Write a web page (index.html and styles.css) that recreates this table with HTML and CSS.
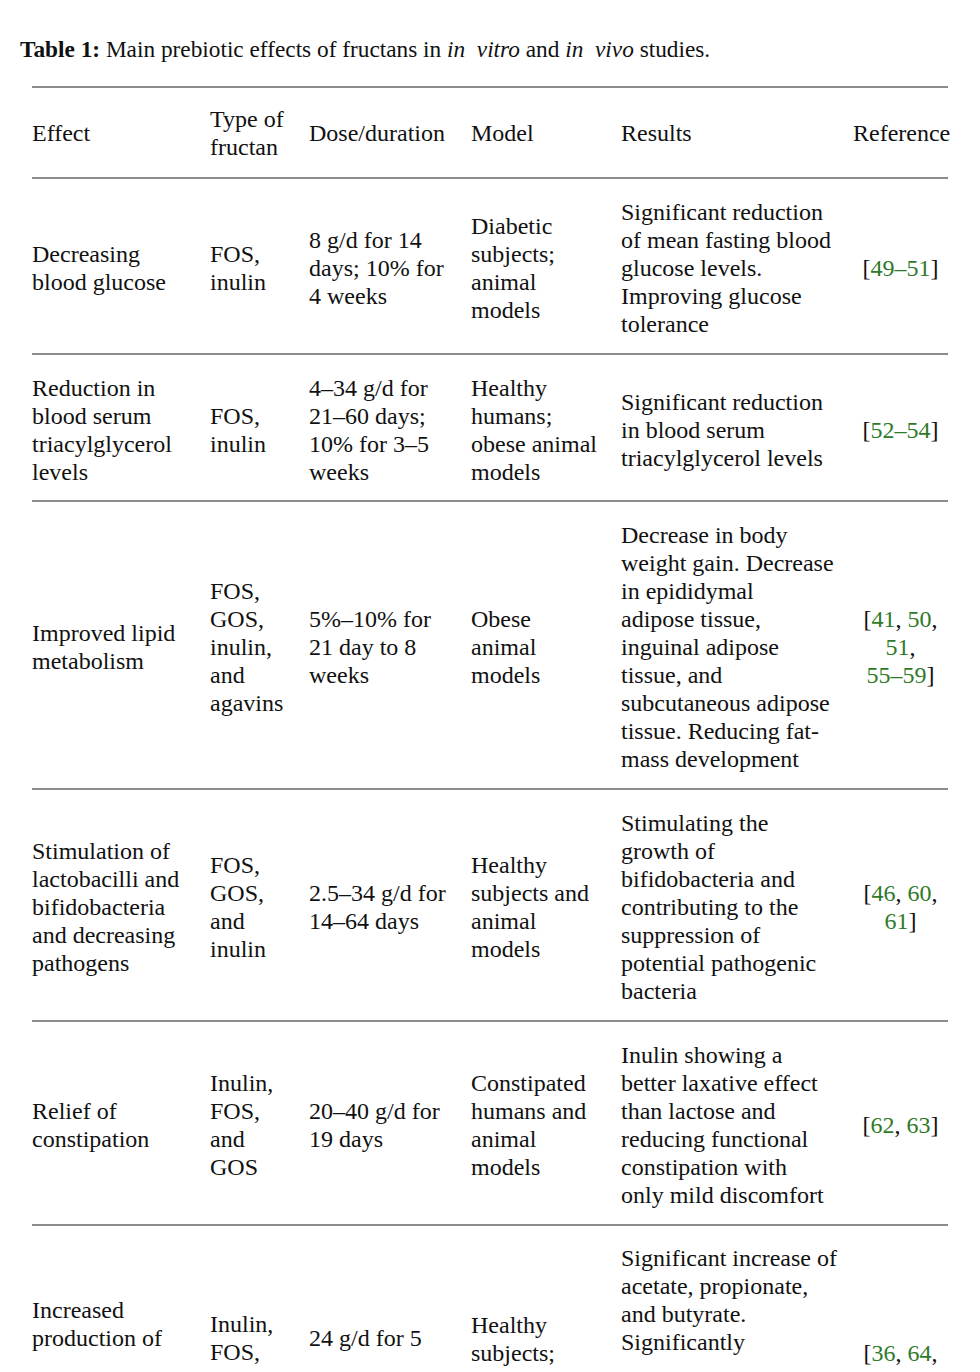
FILE: index.html
```html
<!DOCTYPE html>
<html lang="en">
<head>
<meta charset="utf-8">
<title>Table 1</title>
<link rel="stylesheet" href="styles.css">
</head>
<body>
<div class="page">
  <p class="caption"><b>Table 1:</b> Main prebiotic effects of fructans in <i>in&nbsp; vitro</i> and <i>in&nbsp; vivo</i> studies.</p>
  <table class="data">
    <colgroup>
      <col class="c-effect"><col class="c-type"><col class="c-dose"><col class="c-model"><col class="c-results"><col class="c-ref">
    </colgroup>
    <thead>
      <tr>
        <th>Effect</th>
        <th>Type of<br>fructan</th>
        <th>Dose/duration</th>
        <th>Model</th>
        <th>Results</th>
        <th class="ref">Reference</th>
      </tr>
    </thead>
    <tbody>
      <tr>
        <td>Decreasing<br>blood glucose</td>
        <td>FOS,<br>inulin</td>
        <td>8 g/d for 14<br>days; 10% for<br>4 weeks</td>
        <td>Diabetic<br>subjects;<br>animal<br>models</td>
        <td>Significant reduction<br>of mean fasting blood<br>glucose levels.<br>Improving glucose<br>tolerance</td>
        <td class="ref">[<span class="cite">49–51</span>]</td>
      </tr>
      <tr class="tight">
        <td>Reduction in<br>blood serum<br>triacylglycerol<br>levels</td>
        <td>FOS,<br>inulin</td>
        <td>4–34 g/d for<br>21–60 days;<br>10% for 3–5<br>weeks</td>
        <td>Healthy<br>humans;<br>obese animal<br>models</td>
        <td>Significant reduction<br>in blood serum<br>triacylglycerol levels</td>
        <td class="ref">[<span class="cite">52–54</span>]</td>
      </tr>
      <tr>
        <td>Improved lipid<br>metabolism</td>
        <td>FOS,<br>GOS,<br>inulin,<br>and<br>agavins</td>
        <td>5%–10% for<br>21 day to 8<br>weeks</td>
        <td>Obese<br>animal<br>models</td>
        <td>Decrease in body<br>weight gain. Decrease<br>in epididymal<br>adipose tissue,<br>inguinal adipose<br>tissue, and<br>subcutaneous adipose<br>tissue. Reducing fat-<br>mass development</td>
        <td class="ref">[<span class="cite">41</span>, <span class="cite">50</span>,<br><span class="cite">51</span>,<br><span class="cite">55–59</span>]</td>
      </tr>
      <tr>
        <td>Stimulation of<br>lactobacilli and<br>bifidobacteria<br>and decreasing<br>pathogens</td>
        <td>FOS,<br>GOS,<br>and<br>inulin</td>
        <td>2.5–34 g/d for<br>14–64 days</td>
        <td>Healthy<br>subjects and<br>animal<br>models</td>
        <td>Stimulating the<br>growth of<br>bifidobacteria and<br>contributing to the<br>suppression of<br>potential pathogenic<br>bacteria</td>
        <td class="ref">[<span class="cite">46</span>, <span class="cite">60</span>,<br><span class="cite">61</span>]</td>
      </tr>
      <tr>
        <td>Relief of<br>constipation</td>
        <td>Inulin,<br>FOS,<br>and<br>GOS</td>
        <td>20–40 g/d for<br>19 days</td>
        <td>Constipated<br>humans and<br>animal<br>models</td>
        <td>Inulin showing a<br>better laxative effect<br>than lactose and<br>reducing functional<br>constipation with<br>only mild discomfort</td>
        <td class="ref">[<span class="cite">62</span>, <span class="cite">63</span>]</td>
      </tr>
      <tr class="split">
        <td class="s-effect">Increased<br>production of</td>
        <td class="s-type">Inulin,<br>FOS,</td>
        <td class="s-dose">24 g/d for 5</td>
        <td class="s-model">Healthy<br>subjects;</td>
        <td class="s-results">Significant increase of<br>acetate, propionate,<br>and butyrate.<br>Significantly</td>
        <td class="ref s-ref">[<span class="cite">36</span>, <span class="cite">64</span>,</td>
      </tr>
    </tbody>
  </table>
</div>
</body>
</html>
```

FILE: styles.css
```css
html, body {
  margin: 0;
  padding: 0;
  background: #ffffff;
}

body {
  font-family: "Liberation Serif", "Times New Roman", serif;
  color: #111111;
}

.page {
  padding: 35px 32px 0 20px;
}

.caption {
  margin: 0 0 23px 0;
  font-size: 23.3px;
  line-height: 28px;
}

.caption b {
  font-weight: bold;
}

.data {
  margin-left: 12px;
  width: 916px;
  table-layout: fixed;
  border-collapse: collapse;
  font-size: 24px;
  line-height: 28px;
}

.c-effect { width: 178px; }
.c-type { width: 99px; }
.c-dose { width: 162px; }
.c-model { width: 150px; }
.c-results { width: 232px; }
.c-ref { width: 95px; }

.data th,
.data td {
  padding: 19px 0 15px;
  text-align: left;
  vertical-align: middle;
  font-weight: normal;
  white-space: nowrap;
  border-top: 2px solid #8c8c8c;
}

.data thead th {
  padding: 17px 0 16px;
  border-bottom: 2px solid #8c8c8c;
}

.data tr.tight td {
  padding-bottom: 14px;
}

.data .ref {
  text-align: center;
}

.cite {
  color: #2f7a28;
}

/* last row continues on the next page: each cell fragment sits at its own height */
.data tr.split td {
  vertical-align: top;
  padding-bottom: 17px;
}

.data tr.split .s-effect { padding-top: 70px; }
.data tr.split .s-type { padding-top: 84px; }
.data tr.split .s-dose { padding-top: 98px; }
.data tr.split .s-model { padding-top: 85px; }
.data tr.split .s-results { padding-top: 18px; }
.data tr.split .s-ref { padding-top: 113px; }
```
